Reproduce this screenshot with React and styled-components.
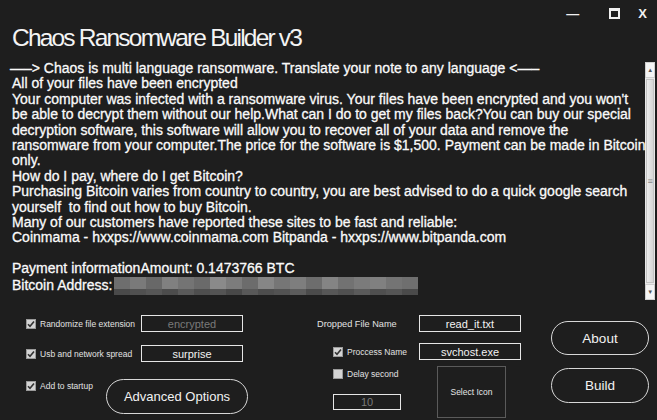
import React from "react";
import styled, { createGlobalStyle } from "styled-components";

const GlobalStyle = createGlobalStyle`
  html, body {
    margin: 0;
    padding: 0;
    background: #1e1e1e;
  }
`;

const noteLines = [
  "—–> Chaos is multi language ransomware. Translate your note to any language <—–",
  "All of your files have been encrypted",
  "Your computer was infected with a ransomware virus. Your files have been encrypted and you won't",
  "be able to decrypt them without our help.What can I do to get my files back?You can buy our special",
  "decryption software, this software will allow you to recover all of your data and remove the",
  "ransomware from your computer.The price for the software is $1,500. Payment can be made in Bitcoin",
  "only.",
  "How do I pay, where do I get Bitcoin?",
  "Purchasing Bitcoin varies from country to country, you are best advised to do a quick google search",
  "yourself  to find out how to buy Bitcoin.",
  "Many of our customers have reported these sites to be fast and reliable:",
  "Coinmama - hxxps://www.coinmama.com Bitpanda - hxxps://www.bitpanda.com",
  "",
  "Payment informationAmount: 0.1473766 BTC",
];

// pixelated (blurred) bitcoin address
const mosaicTop = [
  "#6e6e6e", "#7a7a7a", "#686868", "#808080", "#747474", "#6a6a6a", "#8a8a8a",
  "#7c7c7c", "#6c6c6c", "#868686", "#767676", "#7e7e7e", "#6d6d6d", "#848484",
  "#727272", "#7b7b7b", "#808080", "#747474", "#6f6f6f",
];
const mosaicBottom = [
  "#4a4a4a", "#505050", "#565656", "#4c4c4c", "#5a5a5a", "#4e4e4e", "#545454",
  "#484848", "#585858", "#4d4d4d", "#525252", "#5c5c5c", "#4b4b4b", "#575757",
  "#505050", "#5a5a5a", "#4f4f4f", "#555555", "#4a4a4a",
];

const CheckMark = () => (
  <svg width="8" height="8" viewBox="0 0 8 8">
    <path d="M1 4.2 L3 6.3 L7 1.5" stroke="#333" strokeWidth="1.6" fill="none" />
  </svg>
);

const Check = ({ checked, children }) => (
  <CheckRow>
    <CheckBox>{checked && <CheckMark />}</CheckBox>
    <SmallLabel>{children}</SmallLabel>
  </CheckRow>
);

const App = () => {
  return (
    <Window>
      <GlobalStyle />
      <TitleBar>
        <Title>Chaos Ransomware Builder v3</Title>
        <WinControls>
          <MinGlyph>—</MinGlyph>
          <MaxBox />
          <CtrlGlyph>X</CtrlGlyph>
        </WinControls>
      </TitleBar>

      <NoteArea>
        <NoteText>
          {noteLines.map((line, idx) => (
            <NoteLine key={idx}>{line || "\u00a0"}</NoteLine>
          ))}
          <NoteLine>
            Bitcoin Address:
            <Mosaic>
              <MosaicRow>
                {mosaicTop.map((c, i) => (
                  <MosaicCell key={i} style={{ background: c }} />
                ))}
              </MosaicRow>
              <MosaicRow>
                {mosaicBottom.map((c, i) => (
                  <MosaicCell key={i} style={{ background: c }} />
                ))}
              </MosaicRow>
            </Mosaic>
          </NoteLine>
        </NoteText>
        <ScrollBar>
          <ScrollBtn>▲</ScrollBtn>
          <Thumb>
            <Grip>≡</Grip>
          </Thumb>
          <ScrollBtn>▼</ScrollBtn>
        </ScrollBar>
      </NoteArea>

      <Panel>
        <LeftCol>
          <OptionGrid>
            <Check checked>Randomize file extension</Check>
            <Field muted>encrypted</Field>
            <Check checked>Usb and network spread</Check>
            <Field>surprise</Field>
          </OptionGrid>
          <StartupRow>
            <StartupCheck>
              <Check checked>Add to startup</Check>
            </StartupCheck>
            <PillButton width="142px" height="35px" size="13px">
              Advanced Options
            </PillButton>
          </StartupRow>
        </LeftCol>

        <MidCol>
          <MidGrid>
            <FieldLabel>Dropped File Name</FieldLabel>
            <Field>read_it.txt</Field>
            <Indented>
              <Check checked>Proccess Name</Check>
            </Indented>
            <Field>svchost.exe</Field>
          </MidGrid>
          <DelayRow>
            <DelayGroup>
              <Check>Delay second</Check>
              <Field muted width="68px" height="16px">
                10
              </Field>
            </DelayGroup>
            <IconBox>Select Icon</IconBox>
          </DelayRow>
        </MidCol>

        <RightCol>
          <PillButton width="98px" height="34px" size="13.5px">
            About
          </PillButton>
          <PillButton width="98px" height="35px" size="13.5px">
            Build
          </PillButton>
        </RightCol>
      </Panel>
    </Window>
  );
};

const Window = styled.div`
  width: 657px;
  height: 420px;
  background: #1e1e1e;
  color: #f2f2f2;
  font-family: "Liberation Sans", Arial, sans-serif;
  overflow: hidden;
  display: flex;
  flex-direction: column;
`;

const TitleBar = styled.div`
  height: 58px;
  display: flex;
  justify-content: space-between;
  align-items: flex-start;
  box-sizing: border-box;
`;

const Title = styled.div`
  font-size: 24.5px;
  letter-spacing: -1.8px;
  margin: 24px 0 0 12px;
  color: #f4f4f4;
`;

const WinControls = styled.div`
  display: flex;
  align-items: center;
  margin: 6px 10px 0 0;
`;

const CtrlGlyph = styled.span`
  font-size: 13px;
  font-weight: bold;
  color: #f0f0f0;
`;

const MinGlyph = styled(CtrlGlyph)`
  margin-right: 30px;
`;

const MaxBox = styled.span`
  width: 7px;
  height: 6px;
  border: 2px solid #f0f0f0;
  border-top-width: 3px;
  margin-right: 18px;
`;

const NoteArea = styled.div`
  height: 242px;
  display: flex;
  padding-left: 10px;
`;

const NoteText = styled.div`
  flex: 1;
  padding-top: 3px;
  font-size: 14px;
  line-height: 15.4px;
  white-space: pre;
  color: #fafafa;
  -webkit-text-stroke: 0.3px #fafafa;
`;

const NoteLine = styled.div`
  display: flex;
  align-items: center;
  &:not(:first-child) {
    padding-left: 2px;
  }
`;

const Mosaic = styled.div`
  display: flex;
  flex-direction: column;
  margin-left: 2px;
`;

const MosaicRow = styled.div`
  display: flex;
  &:first-child {
    height: 12px;
  }
  &:last-child {
    height: 6px;
  }
`;

const MosaicCell = styled.div`
  width: 16px;
`;

const ScrollBar = styled.div`
  width: 15px;
  margin: 4px 2px 0 0;
  height: 238px;
  display: flex;
  flex-direction: column;
  background: #e8e8e8;
`;

const ScrollBtn = styled.div`
  height: 16px;
  background: #f4f4f4;
  border: 1px solid #cfcfcf;
  box-sizing: border-box;
  color: #555;
  font-size: 6px;
  display: flex;
  align-items: center;
  justify-content: center;
`;

const Thumb = styled.div`
  flex: 1;
  margin: 1px 1px;
  background: linear-gradient(to right, #ececec, #d6d6d6);
  border: 1px solid #c4c4c4;
  display: flex;
  align-items: center;
  justify-content: center;
`;

const Grip = styled.span`
  font-size: 9px;
  color: #888;
`;

const Panel = styled.div`
  flex: 1;
  display: flex;
  align-items: flex-start;
  padding-left: 26px;
`;

const LeftCol = styled.div`
  width: 224px;
  padding-top: 15px;
  display: flex;
  flex-direction: column;
  gap: 17px;
`;

const OptionGrid = styled.div`
  display: grid;
  grid-template-columns: 115px 109px;
  grid-auto-rows: 17px;
  row-gap: 13px;
  align-items: center;
`;

const StartupRow = styled.div`
  display: flex;
  align-items: flex-start;
`;

const StartupCheck = styled.div`
  width: 80px;
  padding-top: 2px;
`;

const MidCol = styled.div`
  width: 204px;
  margin-left: 67px;
  padding-top: 15px;
  display: flex;
  flex-direction: column;
  gap: 6px;
`;

const MidGrid = styled.div`
  display: grid;
  grid-template-columns: 102px 102px;
  grid-auto-rows: 17px;
  row-gap: 11px;
  align-items: center;
`;

const Indented = styled.div`
  padding-left: 16px;
`;

const DelayRow = styled.div`
  display: flex;
  align-items: flex-start;
`;

const DelayGroup = styled.div`
  width: 104px;
  padding: 3px 0 0 16px;
  display: flex;
  flex-direction: column;
  gap: 15px;
`;

const IconBox = styled.div`
  width: 69px;
  height: 52px;
  box-sizing: border-box;
  border: 1px solid #5a5a5a;
  display: flex;
  align-items: center;
  justify-content: center;
  font-size: 8.5px;
  color: #e6e6e6;
`;

const RightCol = styled.div`
  margin-left: 30px;
  padding-top: 21px;
  display: flex;
  flex-direction: column;
  gap: 13px;
`;

const CheckRow = styled.div`
  display: flex;
  align-items: center;
  gap: 4px;
`;

const CheckBox = styled.span`
  width: 10px;
  height: 10px;
  background: #d4d4d4;
  border: 1px solid #9a9a9a;
  box-sizing: border-box;
  display: flex;
  align-items: center;
  justify-content: center;
  flex-shrink: 0;
`;

const SmallLabel = styled.span`
  font-size: 8.5px;
  color: #e2e2e2;
  white-space: nowrap;
`;

const FieldLabel = styled(SmallLabel)`
  font-size: 9.2px;
`;

const Field = styled.div`
  width: ${(props) => props.width || "102px"};
  height: ${(props) => props.height || "17px"};
  box-sizing: border-box;
  border: 1.5px solid #e6e6e6;
  display: flex;
  align-items: center;
  justify-content: center;
  font-size: 11px;
  color: ${(props) => (props.muted ? "#7a7a7a" : "#f2f2f2")};
`;

const PillButton = styled.div`
  width: ${(props) => props.width};
  height: ${(props) => props.height};
  box-sizing: border-box;
  border: 1.5px solid #d8d8d8;
  border-radius: 18px;
  display: flex;
  align-items: center;
  justify-content: center;
  font-size: ${(props) => props.size};
  color: #f2f2f2;
`;

export default App;
